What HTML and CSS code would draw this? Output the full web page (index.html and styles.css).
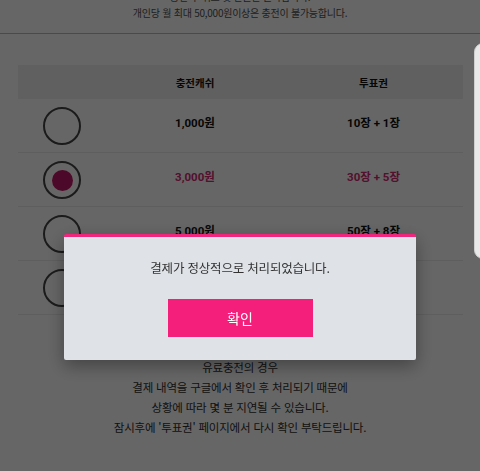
FILE: index.html
```html
<!DOCTYPE html>
<html lang="ko">
<head>
  <meta charset="UTF-8">
  <meta name="viewport" content="width=device-width, initial-scale=1.0">
  <title>캐쉬 충전</title>
  <link rel="stylesheet" href="styles.css">
</head>
<body>
  <div class="page">
    <div class="notice">
      <p>충전 후 취소 및 환불은 불가합니다.</p>
      <p>개인당 월 최대 50,000원이상은 충전이 불가능합니다.</p>
    </div>

    <div class="table">
      <div class="row head">
        <div class="cell pick"></div>
        <div class="cell">충전캐쉬</div>
        <div class="cell">투표권</div>
      </div>
      <div class="row">
        <div class="cell pick"><span class="radio"></span></div>
        <div class="cell">1,000원</div>
        <div class="cell">10장 + 1장</div>
      </div>
      <div class="row on">
        <div class="cell pick"><span class="radio"></span></div>
        <div class="cell">3,000원</div>
        <div class="cell">30장 + 5장</div>
      </div>
      <div class="row">
        <div class="cell pick"><span class="radio"></span></div>
        <div class="cell">5,000원</div>
        <div class="cell">50장 + 8장</div>
      </div>
      <div class="row">
        <div class="cell pick"><span class="radio"></span></div>
        <div class="cell">10,000원</div>
        <div class="cell">100장 + 20장</div>
      </div>
    </div>

    <div class="guide">
      <p>유료충전의 경우</p>
      <p>결제 내역을 구글에서 확인 후 처리되기 때문에</p>
      <p>상황에 따라 몇 분 지연될 수 있습니다.</p>
      <p>잠시후에 '투표권' 페이지에서 다시 확인 부탁드립니다.</p>
    </div>
  </div>

  <div class="dim"></div>
  <div class="edge"></div>

  <div class="modal">
    <p class="modal-msg">결제가 정상적으로 처리되었습니다.</p>
    <button class="modal-btn">확인</button>
  </div>
</body>
</html>
```

FILE: styles.css
```css
body {
  margin: 0;
  padding: 0;
  background: #fff;
  font-family: "Noto Sans CJK KR", "Noto Sans", sans-serif;
  color: #333;
  overflow: hidden;
}

p {
  margin: 0;
}

.page {
  height: 471px;
}

.notice {
  margin-top: -11px;
  padding-bottom: 12px;
  border-bottom: 1px solid #b9b9b9;
  text-align: center;
  font-size: 10px;
  line-height: 16px;
  letter-spacing: -0.25px;
  color: #505050;
}

.table {
  margin: 31px 17px 0 18px;
}

.row {
  display: grid;
  grid-template-columns: 88px 178px 1fr;
  height: 53px;
  border-bottom: 1px solid #ececec;
  font-family: "Roboto", "Noto Sans CJK KR", sans-serif;
  font-size: 11.5px;
  font-weight: 700;
  color: #111;
}

.row.head {
  height: 34px;
  background: #f0f0f0;
  border-bottom: 0;
  font-family: "Noto Sans CJK KR", sans-serif;
  font-size: 10.5px;
}

.row.on {
  color: #d12a72;
}

.cell {
  display: flex;
  align-items: center;
  justify-content: center;
  padding-bottom: 8px;
}

.head .cell {
  padding-bottom: 0;
}

.cell.pick {
  padding-bottom: 0;
  padding-top: 1px;
}

.radio {
  width: 34px;
  height: 34px;
  border: 2px solid #444;
  border-radius: 50%;
  display: flex;
  align-items: center;
  justify-content: center;
}

.on .radio::after {
  content: '';
  width: 21px;
  height: 21px;
  border-radius: 50%;
  background: #c01866;
}

.guide {
  margin-top: 42px;
  text-align: center;
  font-size: 11.5px;
  line-height: 20px;
  letter-spacing: -0.2px;
  color: #2e2e2e;
}

.dim {
  position: fixed;
  inset: 0;
  background: rgba(0, 0, 0, 0.6);
}

.edge {
  position: fixed;
  top: 43px;
  right: -12px;
  width: 16px;
  height: 214px;
  background: #e9e9e9;
  border: 1px solid #cfcfcf;
  border-radius: 10px;
}

.modal {
  position: fixed;
  top: 234px;
  left: 64px;
  width: 352px;
  height: 123px;
  box-sizing: content-box;
  border-top: 3px solid #f0257c;
  border-radius: 2px;
  background: #dfe3e7;
  box-shadow: 0 6px 18px rgba(0, 0, 0, 0.35);
  display: flex;
  flex-direction: column;
  align-items: center;
}

.modal-msg {
  margin-top: 22px;
  font-size: 12.5px;
  line-height: 18px;
  letter-spacing: -0.2px;
  color: #333;
}

.modal-btn {
  margin-top: 22px;
  width: 145px;
  height: 38px;
  border: 0;
  background: #f41f7a;
  color: #fff;
  font-family: "Noto Sans CJK KR", sans-serif;
  font-size: 14px;
  padding: 0;
}
```
